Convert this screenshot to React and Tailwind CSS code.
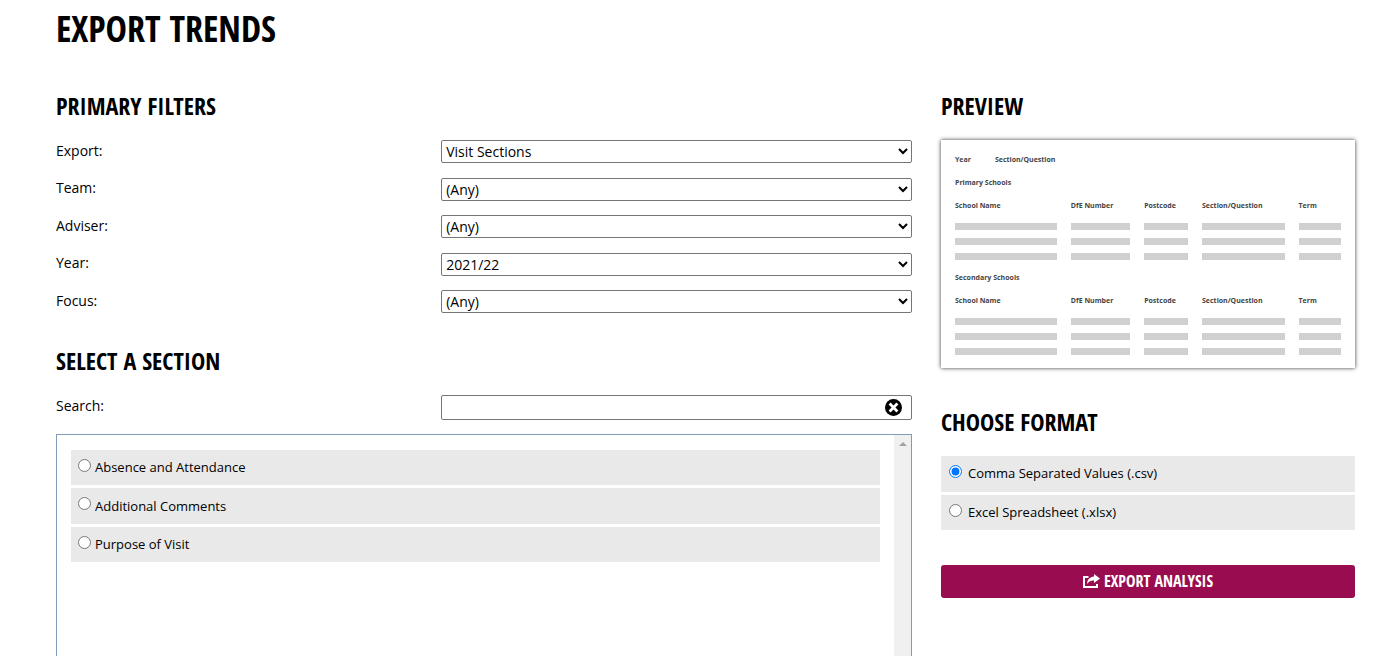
import React, { useState } from "react";

const filters = [
  { id: "export", label: "Export:", value: "Visit Sections" },
  { id: "team", label: "Team:", value: "(Any)" },
  { id: "adviser", label: "Adviser:", value: "(Any)" },
  { id: "year", label: "Year:", value: "2021/22" },
  { id: "focus", label: "Focus:", value: "(Any)" },
];

const sections = ["Absence and Attendance", "Additional Comments", "Purpose of Visit"];
const formats = ["Comma Separated Values (.csv)", "Excel Spreadsheet (.xlsx)"];

const previewColumns = [
  { name: "School Name", width: "w-[30%]" },
  { name: "DfE Number", width: "w-[19%]" },
  { name: "Postcode", width: "w-[15%]" },
  { name: "Section/Question", width: "w-[25%]" },
  { name: "Term", width: "w-[11%]" },
];

function Heading({ children }) {
  return (
    <h2 className="mb-[18px] font-['Open_Sans_Condensed','Open_Sans',sans-serif] text-2xl/8 font-bold uppercase">
      {children}
    </h2>
  );
}

function ClearIcon() {
  return (
    <svg viewBox="0 0 17 17" className="size-[17px]" aria-hidden="true">
      <circle cx="8.5" cy="8.5" r="8.5" fill="#000" />
      <path d="M4.600 4.600l7.800 7.800M12.400 4.600l-7.800 7.800" stroke="#fff" strokeWidth="2.800" />
    </svg>
  );
}

function ShareIcon() {
  return (
    <svg viewBox="0 0 17 14" className="h-[14px] w-[17px]" aria-hidden="true">
      <path d="M5.500 3H1v10h13v-3" fill="none" stroke="#fff" strokeWidth="2" />
      <path d="M11 0l6 4.500L11 9V6.500C8 6.300 6 7.300 4 10c.2-4.400 2.800-7.300 7-7.600z" fill="#fff" />
    </svg>
  );
}

function PreviewGroup({ title }) {
  return (
    <table className="mb-[2px] w-full table-fixed text-left">
      <caption className="h-[23px] text-left">{title}</caption>
      <thead>
        <tr className="h-[25px]">
          {previewColumns.map((col) => (
            <th key={col.name} className={`${col.width} pb-[2px] align-middle whitespace-nowrap`}>
              {col.name}
            </th>
          ))}
        </tr>
      </thead>
      <tbody>
        {[0, 1, 2].map((row) => (
          <tr key={row} className="h-[15px]">
            {previewColumns.map((col) => (
              <td key={col.name} className="pr-[14px] align-middle last:pr-0">
                <div className="h-[7px] bg-[#d0d0d0]" />
              </td>
            ))}
          </tr>
        ))}
      </tbody>
    </table>
  );
}

function Preview() {
  return (
    <div className="bg-white px-[14px] pt-2 pb-[7px] text-[7px]/[23px] font-bold text-[#444] shadow-[0_0_4px_#000000cc]">
      <div className="flex gap-6">
        <span>Year</span>
        <span>Section/Question</span>
      </div>
      <PreviewGroup title="Primary Schools" />
      <PreviewGroup title="Secondary Schools" />
    </div>
  );
}

export default function App() {
  const [search, setSearch] = useState("");
  const [format, setFormat] = useState(formats[0]);

  return (
    <main className="h-screen overflow-hidden bg-white pt-[5px] pr-[43px] pl-14 font-['Open_Sans',sans-serif] text-sm text-black">
      <h1 className="mb-[37px] font-['Open_Sans_Condensed','Open_Sans',sans-serif] text-4xl/[48px] font-bold uppercase">
        Export Trends
      </h1>

      <div className="grid grid-cols-[856fr_414fr] gap-[29px]">
        <div>
          <Heading>Primary Filters</Heading>
          <div className="mb-8 flex min-h-[173px] flex-col justify-between">
            {filters.map((filter) => (
              <div key={filter.id} className="flex items-center">
                <label htmlFor={filter.id} className="w-[45%] pb-[2px]">
                  {filter.label}
                </label>
                <select
                  id={filter.id}
                  className="h-[23px] w-[55%] rounded-[2px] border border-[#767676] bg-white"
                >
                  <option>{filter.value}</option>
                </select>
              </div>
            ))}
          </div>

          <Heading>Select a Section</Heading>
          <div className="flex items-center">
            <label htmlFor="search" className="w-[45%] pb-[3px]">
              Search:
            </label>
            <div className="relative w-[55%]">
              <input
                id="search"
                type="text"
                value={search}
                onChange={(e) => setSearch(e.target.value)}
                className="block h-[25px] w-full rounded-[2px] border border-[#767676] pr-8 pl-1"
              />
              <button
                type="button"
                aria-label="Clear search"
                onClick={() => setSearch("")}
                className="absolute top-1 right-[10px]"
              >
                <ClearIcon />
              </button>
            </div>
          </div>

          <div className="mt-[14px] flex h-[400px] border border-[#7f9db9]">
            <div className="flex-1 px-[14px] pt-[15px]">
              <div className="grid min-h-[112px] auto-rows-fr gap-[3px] text-[13px]">
                {sections.map((section) => (
                  <label key={section} className="flex items-center gap-1 bg-[#e9e9e9] px-[7px]">
                    <input type="radio" name="section" className="mb-1 size-[13px]" />
                    {section}
                  </label>
                ))}
              </div>
            </div>
            <div className="flex w-[17px] justify-center bg-[#f0f0f0] pt-[7px]">
              <svg viewBox="0 0 8 4" className="h-1 w-2" aria-hidden="true">
                <path d="M4 0l4 4H0z" fill="#a3a3a3" />
              </svg>
            </div>
          </div>
        </div>

        <div>
          <Heading>Preview</Heading>
          <Preview />

          <div className="mt-[38px]">
            <Heading>Choose Format</Heading>
            <div className="grid min-h-[74px] auto-rows-fr gap-[3px] text-[13px]">
              {formats.map((name) => (
                <label key={name} className="flex items-center gap-[6px] bg-[#e9e9e9] px-2">
                  <input
                    type="radio"
                    name="format"
                    checked={format === name}
                    onChange={() => setFormat(name)}
                    className="mb-1 size-[13px]"
                  />
                  {name}
                </label>
              ))}
            </div>
          </div>

          <button
            type="button"
            className="mt-[35px] flex h-[33px] w-full items-center justify-center gap-1 rounded-[3px] bg-[#990c4f] pb-[2px] font-['Open_Sans_Condensed','Open_Sans',sans-serif] text-base font-bold text-white uppercase"
          >
            <ShareIcon />
            Export Analysis
          </button>
        </div>
      </div>
    </main>
  );
}
